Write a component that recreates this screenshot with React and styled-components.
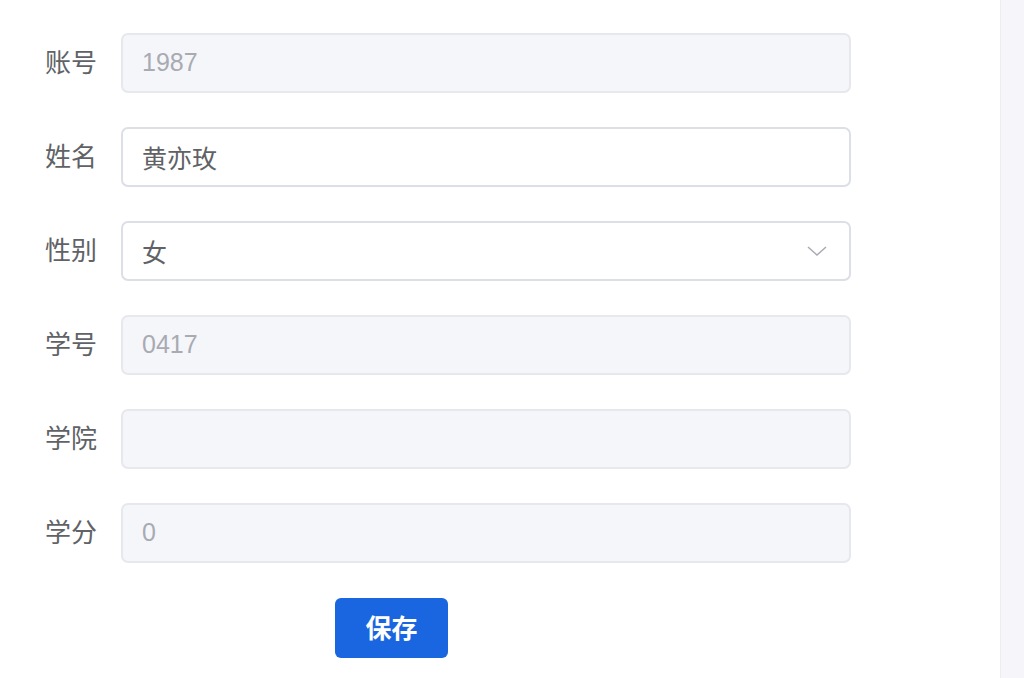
import React, { useState } from "react";
import styled, { createGlobalStyle } from "styled-components";

const GlobalStyle = createGlobalStyle`
  html, body {
    margin: 0;
    padding: 0;
    background: #ffffff;
  }
  body {
    font-family: "Helvetica Neue", "Liberation Sans", "Noto Sans CJK SC", sans-serif;
  }
`;

const Page = styled.div`
  display: flex;
  width: 1024px;
  height: 678px;
  overflow: hidden;
`;

const Main = styled.div`
  flex: 1;
  padding-top: 33px;
`;

const Side = styled.div`
  width: 23px;
  background: #f5f5fa;
  border-left: 1px solid #ececf2;
`;

const Form = styled.form`
  display: flex;
  flex-direction: column;
  gap: 34px;
  width: 851px;
`;

const Row = styled.div`
  display: flex;
  align-items: center;
  height: 60px;
`;

const Label = styled.label`
  width: 97px;
  padding-right: 24px;
  text-align: right;
  font-size: 26px;
  line-height: 1;
  color: #606266;
  flex-shrink: 0;
`;

const Field = styled.div`
  position: relative;
  flex: 1;
  height: 60px;
  box-sizing: border-box;
  border-radius: 7px;
  border: 2px solid ${(p) => (p.disabled ? "#e6e8ee" : "#dcdfe6")};
  background: ${(p) => (p.disabled ? "#f5f6fa" : "#ffffff")};
  display: flex;
  align-items: center;
`;

const Input = styled.input`
  border: none;
  outline: none;
  background: transparent;
  width: 100%;
  height: 100%;
  padding: 0 19px 1px;
  box-sizing: border-box;
  font-family: inherit;
  font-size: 25px;
  color: ${(p) => (p.disabled ? "#a8abb2" : "#606266")};
  -webkit-text-fill-color: ${(p) => (p.disabled ? "#a8abb2" : "#606266")};
`;

const Arrow = styled.svg`
  position: absolute;
  right: 22px;
  top: 50%;
  margin-top: -8px;
`;

const Actions = styled.div`
  display: flex;
  padding-left: 335px;
  margin-top: 1px;
`;

const SaveButton = styled.button`
  width: 113px;
  height: 60px;
  padding: 0 0 3px;
  border: none;
  border-radius: 6px;
  background: #1a66e0;
  color: #ffffff;
  font-family: inherit;
  font-size: 26px;
  font-weight: 700;
  cursor: pointer;
`;

export default function App() {
  const [name, setName] = useState("黄亦玫");

  const rows = [
    { label: "账号", value: "1987", disabled: true },
    { label: "姓名", value: name, onChange: (e) => setName(e.target.value) },
    { label: "性别", value: "女", select: true },
    { label: "学号", value: "0417", disabled: true },
    { label: "学院", value: "", disabled: true },
    { label: "学分", value: "0", disabled: true },
  ];

  return (
    <Page>
      <GlobalStyle />
      <Main>
        <Form onSubmit={(e) => e.preventDefault()}>
          {rows.map((r) => (
            <Row key={r.label}>
              <Label>{r.label}</Label>
              <Field disabled={r.disabled}>
                <Input
                  value={r.value}
                  disabled={r.disabled}
                  readOnly={r.select || !r.onChange}
                  onChange={r.onChange}
                />
                {r.select && (
                  <Arrow width="20" height="16" viewBox="0 0 20 16" fill="none">
                    <path d="M1 4l9 8 9-8" stroke="#a8abb2" strokeWidth="1.5" />
                  </Arrow>
                )}
              </Field>
            </Row>
          ))}
          <Actions>
            <SaveButton type="submit">保存</SaveButton>
          </Actions>
        </Form>
      </Main>
      <Side />
    </Page>
  );
}
